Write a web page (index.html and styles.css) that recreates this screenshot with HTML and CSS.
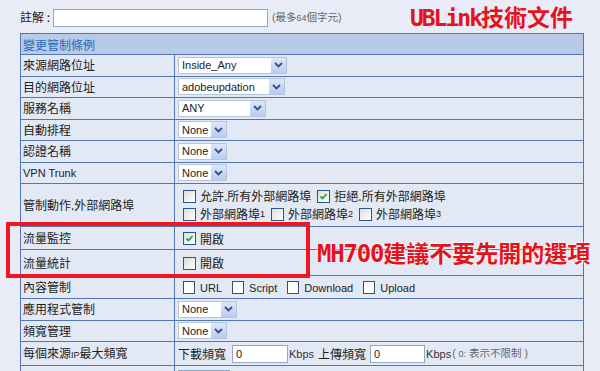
FILE: index.html
```html
<!DOCTYPE html>
<html lang="zh-Hant">

<head>
    <meta charset="UTF-8">
    <title>變更管制條例</title>
    <link rel="stylesheet" href="styles.css">
</head>

<body>
    <div class="note-bar">
        <label class="note-label" for="note">註解 :</label>
        <input class="text-input note-input" id="note" type="text">
        <span class="hint">(最多<small>64</small>個字元)</span>
        <span class="stamp"><span class="stamp-latin">UBLink</span>技術文件</span>
    </div>

    <div class="rule-wrap">
        <table class="rule-table">
            <tr class="head">
                <th colspan="2">變更管制條例</th>
            </tr>
            <tr>
                <td class="name">來源網路位址</td>
                <td class="value">
                    <span class="combo w-src"><span class="combo-text">Inside_Any</span><span class="combo-btn"><svg width="9" height="6" viewBox="0 0 9 6"><path d="M1 1 L4.5 4.5 L8 1" fill="none" stroke="#34508a" stroke-width="1.8"/></svg></span></span>
                </td>
            </tr>
            <tr>
                <td class="name">目的網路位址</td>
                <td class="value">
                    <span class="combo w-dst"><span class="combo-text">adobeupdation</span><span class="combo-btn"><svg width="9" height="6" viewBox="0 0 9 6"><path d="M1 1 L4.5 4.5 L8 1" fill="none" stroke="#34508a" stroke-width="1.8"/></svg></span></span>
                </td>
            </tr>
            <tr>
                <td class="name">服務名稱</td>
                <td class="value">
                    <span class="combo w-svc"><span class="combo-text">ANY</span><span class="combo-btn"><svg width="9" height="6" viewBox="0 0 9 6"><path d="M1 1 L4.5 4.5 L8 1" fill="none" stroke="#34508a" stroke-width="1.8"/></svg></span></span>
                </td>
            </tr>
            <tr>
                <td class="name">自動排程</td>
                <td class="value">
                    <span class="combo w-none"><span class="combo-text">None</span><span class="combo-btn"><svg width="9" height="6" viewBox="0 0 9 6"><path d="M1 1 L4.5 4.5 L8 1" fill="none" stroke="#34508a" stroke-width="1.8"/></svg></span></span>
                </td>
            </tr>
            <tr>
                <td class="name">認證名稱</td>
                <td class="value">
                    <span class="combo w-none"><span class="combo-text">None</span><span class="combo-btn"><svg width="9" height="6" viewBox="0 0 9 6"><path d="M1 1 L4.5 4.5 L8 1" fill="none" stroke="#34508a" stroke-width="1.8"/></svg></span></span>
                </td>
            </tr>
            <tr>
                <td class="name latin">VPN Trunk</td>
                <td class="value">
                    <span class="combo w-none"><span class="combo-text">None</span><span class="combo-btn"><svg width="9" height="6" viewBox="0 0 9 6"><path d="M1 1 L4.5 4.5 L8 1" fill="none" stroke="#34508a" stroke-width="1.8"/></svg></span></span>
                </td>
            </tr>
            <tr class="row-action">
                <td class="name">管制動作.外部網路埠</td>
                <td class="value">
                    <div class="check-line">
                        <span class="check-item"><span class="box"></span>允許.所有外部網路埠</span>
                        <span class="check-item"><span class="box on"><svg width="9" height="9" viewBox="0 0 9 9"><path d="M1.5 4.5 L3.5 6.5 L7.5 2" fill="none" stroke="#22a83a" stroke-width="1.8"/></svg></span>拒絕.所有外部網路埠</span>
                    </div>
                    <div class="check-line">
                        <span class="check-item"><span class="box"></span>外部網路埠<small>1</small></span>
                        <span class="check-item"><span class="box"></span>外部網路埠<small>2</small></span>
                        <span class="check-item"><span class="box"></span>外部網路埠<small>3</small></span>
                    </div>
                </td>
            </tr>
            <tr class="row-check">
                <td class="name">流量監控</td>
                <td class="value">
                    <span class="check-item"><span class="box on"><svg width="9" height="9" viewBox="0 0 9 9"><path d="M1.5 4.5 L3.5 6.5 L7.5 2" fill="none" stroke="#22a83a" stroke-width="1.8"/></svg></span>開啟</span>
                </td>
            </tr>
            <tr class="row-check tall">
                <td class="name">流量統計</td>
                <td class="value">
                    <span class="check-item"><span class="box"></span>開啟</span>
                </td>
            </tr>
            <tr class="row-check">
                <td class="name">內容管制</td>
                <td class="value">
                    <span class="check-item latin"><span class="box big"></span>URL</span>
                    <span class="check-item latin"><span class="box big"></span>Script</span>
                    <span class="check-item latin"><span class="box big"></span>Download</span>
                    <span class="check-item latin"><span class="box big"></span>Upload</span>
                </td>
            </tr>
            <tr>
                <td class="name">應用程式管制</td>
                <td class="value">
                    <span class="combo w-app"><span class="combo-text">None</span><span class="combo-btn"><svg width="9" height="6" viewBox="0 0 9 6"><path d="M1 1 L4.5 4.5 L8 1" fill="none" stroke="#34508a" stroke-width="1.8"/></svg></span></span>
                </td>
            </tr>
            <tr>
                <td class="name">頻寬管理</td>
                <td class="value">
                    <span class="combo w-none"><span class="combo-text">None</span><span class="combo-btn"><svg width="9" height="6" viewBox="0 0 9 6"><path d="M1 1 L4.5 4.5 L8 1" fill="none" stroke="#34508a" stroke-width="1.8"/></svg></span></span>
                </td>
            </tr>
            <tr class="row-input">
                <td class="name">每個來源<small>IP</small>最大頻寬</td>
                <td class="value">
                    <span class="bw">下載頻寬</span><input class="text-input bw-input" type="text" value="0"><span class="unit">Kbps</span><span class="bw">上傳頻寬</span><input class="text-input bw-input up" type="text" value="0"><span class="unit">Kbps</span><span class="hint">( <small>0:</small> 表示不限制 )</span>
                </td>
            </tr>
            <tr class="row-input">
                <td class="name"></td>
                <td class="value">
                    <input class="text-input last-input" type="text">
                </td>
            </tr>
        </table>

        <!-- annotation drawn over the table -->
        <div class="mark-box"></div>
        <div class="mark-text"><span class="mark-latin">MH700</span>建議不要先開的選項</div>
    </div>
</body>

</html>
```

FILE: styles.css
```css
body {
    margin: 0;
    background-color: #e9ecf6;
    font-family: "Liberation Sans", "Noto Sans CJK TC", sans-serif;
    color: #222;
    font-size: 12px;
}

.note-bar {
    display: flex;
    align-items: center;
    height: 33px;
    padding-left: 20px;
    box-sizing: border-box;
}

.note-label {
    font-family: "Noto Sans CJK TC", sans-serif;
    font-size: 12px;
    width: 33px;
}

.text-input {
    height: 18px;
    border: 1px solid #8fa8c9;
    background-color: #fff;
    box-sizing: border-box;
    padding: 0 3px;
    font-family: "Liberation Sans", sans-serif;
    font-size: 11px;
    color: #222;
}

.note-input {
    width: 215px;
    margin-top: 2px;
}

.hint {
    font-family: "Liberation Sans", "Noto Sans CJK TC", sans-serif;
    font-size: 10.5px;
    color: #666;
    margin-left: 4px;
}

.hint small {
    font-size: 9px;
}

.stamp {
    align-self: flex-start;
    margin: 3px 27px 0 auto;
    font-family: "Noto Sans CJK TC", sans-serif;
    font-size: 23px;
    font-weight: bold;
    color: #e5121c;
    line-height: 26px;
    white-space: nowrap;
}

.stamp-latin,
.mark-latin {
    font-family: "DejaVu Sans Mono", monospace;
    font-size: 23px;
    letter-spacing: -2px;
}

.mark-latin {
    font-size: 24px;
    letter-spacing: -1.2px;
}

.rule-wrap {
    position: relative;
    margin-left: 20px;
    width: 564px;
}

.rule-table {
    width: 564px;
    border-collapse: collapse;
    background-color: #e3e9f4;
}

.rule-table th,
.rule-table td {
    border: 1px solid #5576b4;
    padding: 0;
    height: 20.5px;
    vertical-align: middle;
}

.rule-table th {
    background-color: #b7cbe8;
    color: #2b69b3;
    font-family: "Noto Sans CJK TC", sans-serif;
    font-weight: normal;
    font-size: 12px;
    text-align: left;
    padding-left: 2px;
    height: 20px;
}

.name {
    width: 151px;
    padding-left: 2px !important;
    font-family: "Noto Sans CJK TC", sans-serif;
    font-size: 12px;
    line-height: 14px;
}

.name small,
.check-item small {
    font-family: "Liberation Sans", sans-serif;
    font-size: 9px;
}

.name.latin {
    font-family: "Liberation Sans", sans-serif;
    font-size: 11px;
}

.value {
    padding-left: 3px !important;
    font-size: 11px;
    line-height: 14px;
}

/* drop-down look */
.combo {
    display: inline-flex;
    align-items: center;
    height: 17px;
    border: 1px solid #b4c4dc;
    background-color: #fff;
    box-sizing: border-box;
    vertical-align: middle;
}

.combo-text {
    flex: 1;
    padding-left: 3px;
    font-size: 11px;
    color: #222;
}

.combo-btn {
    display: flex;
    align-items: center;
    justify-content: center;
    width: 15px;
    height: 15px;
    background: linear-gradient(#dde7f8, #b9cdf0);
}

.w-src { width: 109px; }
.w-dst { width: 107px; }
.w-svc { width: 88px; }
.w-none { width: 49px; }
.w-app { width: 59px; }

/* checkboxes */
.row-action td {
    height: 42px;
}

.row-check td {
    height: 22px;
}

.row-check.tall td {
    height: 25px;
}

.row-input td {
    height: 23px;
}

.check-line {
    display: flex;
    align-items: center;
    height: 18px;
}

.check-item {
    display: inline-flex;
    align-items: center;
    margin-left: 5px;
    margin-right: 2px;
    font-family: "Noto Sans CJK TC", sans-serif;
    font-size: 12px;
    vertical-align: middle;
}

.check-line .check-item {
    margin-right: 3px;
}

.check-line .check-item + .check-item {
    margin-left: 3px;
}

.check-item.latin {
    font-family: "Liberation Sans", sans-serif;
    font-size: 11px;
    margin-right: 2px;
}

.box {
    display: inline-flex;
    align-items: center;
    justify-content: center;
    width: 11px;
    height: 11px;
    border: 1px solid #2a5685;
    background: linear-gradient(135deg, #dcdcd6, #fff);
    margin-right: 4px;
}

.box.big {
    width: 10px;
    height: 11px;
    border-color: #3b4f6a;
    background: #fff;
    margin-right: 5px;
}

.bw {
    font-family: "Noto Sans CJK TC", sans-serif;
    font-size: 12px;
    vertical-align: middle;
}

.bw-input {
    width: 56px;
    margin-left: 6px;
    vertical-align: middle;
}

.bw-input.up {
    width: 55px;
    margin-left: 4px;
}

.unit {
    font-size: 11px;
    color: #333;
    margin: 0 4px 0 1px;
    vertical-align: middle;
}

.value .hint {
    margin-left: -3px;
    vertical-align: middle;
}

.last-input {
    width: 52px;
    margin-top: 3px;
    vertical-align: top;
}

/* red annotation */
.mark-box {
    position: absolute;
    left: -14px;
    top: 189px;
    width: 304px;
    height: 56px;
    border: 4px solid #ee1620;
    box-sizing: border-box;
}

.mark-text {
    position: absolute;
    left: 297px;
    top: 206px;
    font-family: "Noto Sans CJK TC", sans-serif;
    font-size: 23px;
    font-weight: bold;
    line-height: 26px;
    color: #e5121c;
    text-shadow: 0 0 2px #fff, 0 0 2px #fff;
    white-space: nowrap;
}
```
